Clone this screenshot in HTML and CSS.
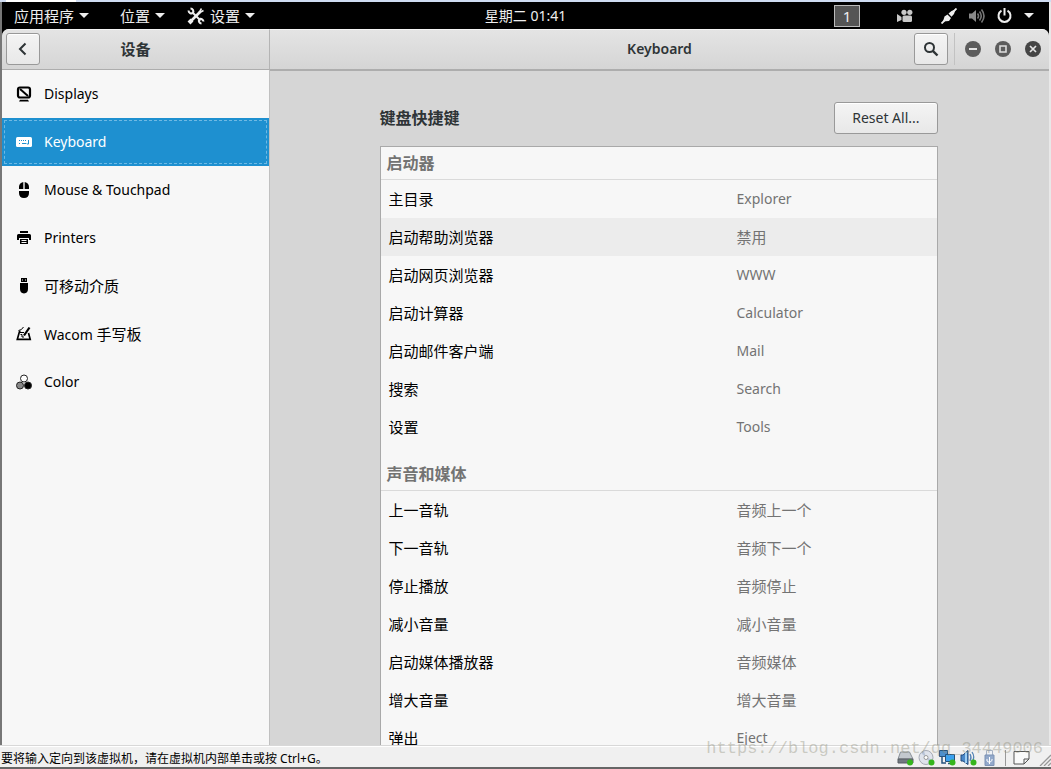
FILE: index.html
```html
<!DOCTYPE html>
<html lang="zh-CN">
<head>
<meta charset="utf-8">
<meta name="viewport" content="width=device-width, initial-scale=1">
<title>Keyboard</title>
<link rel="stylesheet" href="styles.css">
</head>
<body>
<div class="tabstrip"><span class="tabstrip-active"></span></div>
<div class="screen">
  <header class="topbar">
    <div class="menus">
      <button class="menu">应用程序<span class="caret"></span></button>
      <button class="menu">位置<span class="caret"></span></button>
      <button class="menu menu-tools">
        <svg width="18" height="18" viewBox="0 0 18 18" fill="none" stroke="#eee"><path d="M5 5l8.500 8.500" stroke-width="2"/><path d="M13 5L4.500 13.500" stroke-width="2.600"/><path d="M1.500 3.500a3 3 0 0 0 4.500 2.500M3.500 1.500a3 3 0 0 1 2.500 4.500M16.500 14.500a3 3 0 0 0-4-2.500M14.500 16.500a3 3 0 0 1-2.500-4" stroke-width="2"/><path d="M11.500 6.500l3-5M12 6l4.500-2.500" stroke-width="1.500"/><path d="M2 16l3-3" stroke-width="4"/></svg>
        设置<span class="caret"></span></button>
    </div>
    <button class="clock">星期二 01:41</button>
    <div class="tray">
      <button class="workspace">1</button>
      <button class="tray-btn camera" aria-label="录制"><svg width="16" height="14" viewBox="0 0 16 14" fill="#c8c8c8"><circle cx="7" cy="3.300" r="2.600"/><circle cx="12.800" cy="3.300" r="2.600"/><rect x="5.500" y="6.500" width="9.500" height="6.500" rx="1.500"/><path d="M0 5l4.500 3v3L0 13z"/></svg></button>
      <div class="status">
        <button class="tray-btn" aria-label="网络"><svg width="16" height="16" viewBox="0 0 16 16" fill="#eee" stroke="#eee"><path d="M0.500 15.500L4 12M12 4l3.500-3.500" stroke-width="1.800"/><path d="M2 13.500L3.500 8.500l3-2 3.500 3.500-2 3zM7.500 5.500L10.500 3l4-1.500L13 6l-2.500 2.800z" stroke="none"/></svg></button>
        <button class="tray-btn" aria-label="音量"><svg width="16" height="16" viewBox="0 0 16 16" fill="none" stroke="#777" stroke-width="1.600"><path d="M0 5.500h3L7 2v12L3 10.500H0z" fill="#8a8a8a" stroke="none"/><path d="M8.500 5.500q2 2.500 0 5M10.500 3.500q3.500 4.500 0 9M12.500 1.500q5 6.500 0 13"/></svg></button>
        <button class="tray-btn" aria-label="电源"><svg width="15" height="16" viewBox="0 0 15 16" fill="none" stroke="#eee" stroke-width="2"><path d="M7.500 0v7.500M4.500 2.700a6 6 0 1 0 6 0"/></svg></button>
        <span class="caret"></span>
      </div>
    </div>
  </header>

  <div class="window">
    <div class="head head-side">
      <button class="icon-btn" aria-label="返回"><svg width="12" height="14" viewBox="0 0 12 14" fill="none" stroke="#2e3436" stroke-width="2"><path d="M8.500 1.500L3 7l5.500 5.500"/></svg></button>
      <h2 class="title cjk-title">设备</h2>
    </div>
    <div class="head head-main">
      <h1 class="title">Keyboard</h1>
      <div class="head-actions">
        <button class="icon-btn" aria-label="搜索"><svg width="16" height="16" viewBox="0 0 16 16" fill="none" stroke="#2e3436" stroke-width="2"><circle cx="6.500" cy="6.500" r="4.500"/><path d="M9.800 9.800l4.700 4.700" stroke-width="2.400"/></svg></button>
        <div class="win-controls">
          <button class="win-btn" aria-label="最小化"><svg width="16" height="16" viewBox="0 0 16 16"><circle cx="8" cy="8" r="8" fill="#5c5c5c"/><path d="M4 8h8" stroke="#e4e4e4" stroke-width="2"/></svg></button>
          <button class="win-btn" aria-label="最大化"><svg width="16" height="16" viewBox="0 0 16 16"><circle cx="8" cy="8" r="8" fill="#5c5c5c"/><path d="M5 5h6v6H5z" fill="none" stroke="#dedede" stroke-width="1.600"/></svg></button>
          <button class="win-btn" aria-label="关闭"><svg width="16" height="16" viewBox="0 0 16 16"><circle cx="8" cy="8" r="8" fill="#454545"/><path d="M5 5l6 6M11 5l-6 6" stroke="#e4e4e4" stroke-width="1.700"/></svg></button>
        </div>
      </div>
    </div>

    <nav class="sidebar">
      <a class="nav" href="#"><svg width="16" height="16" viewBox="0 0 16 16"><rect x="2" y="1.500" width="12" height="10" rx="2" fill="none" stroke="#000" stroke-width="2.200"/><path d="M4 3l8 7" stroke="#000" stroke-width="2"/><path d="M3 15.500h10l-1-1.700H4z"/></svg>Displays</a>
      <a class="nav active" href="#" aria-current="page"><svg width="16" height="16" viewBox="0 0 16 16"><rect y="3" width="16" height="10" rx="1.500" fill="#fff"/><path d="M3 6.500h8" stroke="#1e90d0" stroke-dasharray="1 1"/><path d="M3 9.500h1M6 9.500h4.500M12.500 6v4H11" fill="none" stroke="#1e90d0"/></svg>Keyboard</a>
      <a class="nav" href="#"><svg width="16" height="16" viewBox="0 0 16 16"><path d="M7.300 0v7H3V5q0-4 4.300-5zM8.700 0v7H13V5q0-4-4.300-5zM3 9h10v2q0 5-5 5t-5-5z"/></svg>Mouse &amp; Touchpad</a>
      <a class="nav" href="#"><svg width="16" height="16" viewBox="0 0 16 16"><path d="M4 1h8v2H4zM2.500 4h11q1.500 0 1.500 1.500V10h-2V8H3v2H1V5.500Q1 4 2.500 4zM4 9h8v5H4z"/><path d="M5.500 10.500h5M5.500 12.500h5" stroke="#f7f7f7"/></svg>Printers</a>
      <a class="nav cjk" href="#"><svg width="16" height="16" viewBox="0 0 16 16"><path d="M5 0h6v4H5zM4 5h8v6q0 4-4 4.500Q4 15 4 11z"/><path d="M6 1.500h1v1H6zM9 1.500h1v1H9z" fill="#f7f7f7"/></svg>可移动介质</a>
      <a class="nav" href="#"><svg width="16" height="16" viewBox="0 0 16 16" fill="none" stroke="#000"><path d="M4.500 5.500H3.500L1.300 13.300h12.900L12.500 7" stroke-width="1.700"/><path d="M13.500 1.500L8 9.500" stroke-width="2.200"/><path d="M2.500 4.500q3 0 5-3.500M4 6.500h4M4.500 8.500h1.500v2.500h2"/></svg><span>Wacom <span class="cjk">手写板</span></span></a>
      <a class="nav" href="#"><svg width="16" height="16" viewBox="0 0 16 16" stroke="#222"><circle cx="8" cy="4.500" r="3.500" fill="#fff"/><circle cx="4" cy="11.500" r="3.500" fill="#888"/><circle cx="12" cy="11.500" r="3.500" fill="#000"/></svg>Color</a>
    </nav>

    <main class="content">
      <div class="panel">
        <div class="panel-head">
          <h2 class="panel-title">键盘快捷键</h2>
          <button class="reset">Reset All...</button>
        </div>
        <table class="shortcuts">
          <colgroup><col class="col-name"><col></colgroup>
          <tbody>
            <tr class="group"><th colspan="2" scope="rowgroup">启动器</th></tr>
            <tr><td>主目录</td><td class="latin">Explorer</td></tr>
            <tr class="hover"><td>启动帮助浏览器</td><td>禁用</td></tr>
            <tr><td>启动网页浏览器</td><td class="latin">WWW</td></tr>
            <tr><td>启动计算器</td><td class="latin">Calculator</td></tr>
            <tr><td>启动邮件客户端</td><td class="latin">Mail</td></tr>
            <tr><td>搜索</td><td class="latin">Search</td></tr>
            <tr><td>设置</td><td class="latin">Tools</td></tr>
          </tbody>
          <tbody>
            <tr class="group group-next"><th colspan="2" scope="rowgroup">声音和媒体</th></tr>
            <tr><td>上一音轨</td><td>音频上一个</td></tr>
            <tr><td>下一音轨</td><td>音频下一个</td></tr>
            <tr><td>停止播放</td><td>音频停止</td></tr>
            <tr><td>减小音量</td><td>减小音量</td></tr>
            <tr><td>启动媒体播放器</td><td>音频媒体</td></tr>
            <tr><td>增大音量</td><td>增大音量</td></tr>
            <tr><td>弹出</td><td class="latin">Eject</td></tr>
          </tbody>
        </table>
      </div>
    </main>
  </div>
</div>

<footer class="statusbar">
  <p class="hint">要将输入定向到该虚拟机，请在虚拟机内部单击或按 Ctrl+G。</p>
  <div class="devices">
    <svg width="17" height="16" viewBox="0 0 17 16"><path d="M3.500 2h9L16 9H1z" fill="#c3c8ce" stroke="#8a9097"/><path d="M1 9h15v4H1z" fill="#727980" stroke="#565c63"/><circle cx="13" cy="12.500" r="3" fill="#35b51c"/></svg>
    <svg width="17" height="16" viewBox="0 0 17 16"><circle cx="8" cy="7.500" r="7" fill="#dfe3ec" stroke="#a6aab4"/><path d="M8 7.500L3 3l3-2zM8 7.500l6 2-2 4z" fill="#b9c4d8"/><circle cx="8" cy="7.500" r="2" fill="#fff" stroke="#999"/><circle cx="13.500" cy="12.500" r="3" fill="#35b51c"/></svg>
    <svg width="17" height="16" viewBox="0 0 17 16"><path d="M.5.500h8v6h-8z" fill="#4d8fcc" stroke="#25527d"/><path d="M6.500 4.500h9v7h-9z" fill="#3ba1ef" stroke="#25527d"/><path d="M3 7v6h4M9 13.500h5" fill="none" stroke="#25527d" stroke-width="1.500"/><circle cx="13.500" cy="12.500" r="3" fill="#35b51c"/></svg>
    <svg width="17" height="16" viewBox="0 0 17 16"><path d="M1 5h2l5-4.500v14L3 11H1z" fill="#4a88c8" stroke="#214b7c"/><path d="M6 2v11" stroke="#9fd0f4" stroke-width="2"/><path d="M10 4q2 3.500 0 7M12 2q3.500 5 0 10" fill="none" stroke="#5383b5" stroke-width="1.300"/><circle cx="13.500" cy="12.500" r="3" fill="#35b51c"/></svg>
    <svg width="17" height="16" viewBox="0 0 17 16"><path d="M5.500.500h6v5h-6z" fill="#eef1f6" stroke="#a7b2c4"/><path d="M4 5h9v10.500H4z" fill="#93a9cb" stroke="#7d92b4"/><path d="M8.500 14V7M6 9v2l2.500 1.500L11 10.500V9" fill="none" stroke="#fff"/></svg>
    <span class="divider"></span>
    <svg class="note" width="17" height="16" viewBox="0 0 17 16"><path d="M1 1.500h15V9l-5 5H1zM16 9h-5v5" fill="#fafafa" stroke="#555"/></svg>
    <svg class="grip" width="12" height="12" viewBox="0 0 12 12"><path d="M1 12L12 1M5 12l7-7M9 12l3-3" stroke="#999" stroke-width="1.300"/></svg>
  </div>
  <span class="watermark">https://blog.csdn.net/qq_34449006</span>
</footer>
</body>
</html>
```
FILE: styles.css
```css
* { box-sizing: border-box; }
body {
  margin: 0;
  height: 100vh;
  display: flex;
  flex-direction: column;
  overflow: hidden;
  background: #f0f0f0;
  color: #000;
  font: 14px/20px "Noto Sans", "Noto Sans CJK SC", sans-serif;
}
button { font: inherit; color: inherit; border: 0; padding: 0; background: none; }
h1, h2, p { margin: 0; }
svg { display: block; flex: none; }

.tabstrip { height: 2px; flex: none; background: #cfdcf2; padding: 0 6px; }
.tabstrip-active { display: block; width: 70px; height: 2px; background: #fff; }

.screen {
  flex: 1;
  min-height: 0;
  display: flex;
  flex-direction: column;
  border-left: 2px solid #777;
  border-right: 2px solid #e8e8e8;
  background: #000;
}

.topbar {
  flex: none;
  height: 27px;
  display: grid;
  grid-template-columns: 1fr auto 1fr;
  align-items: center;
  color: #eee;
}
.menus { display: flex; gap: 31px; padding-left: 12px; }
.menu { display: flex; align-items: center; gap: 5px; font-size: 15px; }
.menu-tools { margin-left: -9px; }
.caret { width: 0; border: 5px solid transparent; border-top-color: #eee; border-bottom: 0; }
.tray { display: flex; justify-content: flex-end; align-items: center; padding-right: 15px; }
.workspace {
  width: 26px;
  height: 22px;
  background: #555;
  border: 1px solid #bbb;
  font-size: 15px;
}
.camera { margin: 0 28px 0 37px; }
.status { display: flex; align-items: center; gap: 12px; }

.window {
  flex: 1;
  min-height: 0;
  display: grid;
  grid-template: 42px minmax(0, 1fr) / 268px minmax(0, 1fr);
  border-radius: 7px 7px 0 0;
  overflow: hidden;
  background: #d6d6d6;
}
.head {
  display: grid;
  grid-template-columns: 1fr auto 1fr;
  align-items: center;
  padding-bottom: 2px;
  background: linear-gradient(#e4e4e4, #d5d5d5);
  border-top: 1px solid #f4f4f4;
  border-bottom: 2px solid #adadad;
}
.head-side { padding-left: 4px; padding-right: 4px; border-right: 1px solid #b4b4b4; border-bottom-width: 1px; margin-bottom: 1px; }
.title { font-size: 14px; line-height: 20px; font-weight: 600; color: #2e3436; }
.head-main .title { grid-column: 2; }
.cjk-title { font-size: 15px; font-weight: 700; }
.icon-btn, .reset {
  border: 1px solid #999;
  border-radius: 3px;
  background: linear-gradient(#f4f4f4, #e8e8e8);
  box-shadow: inset 0 1px #fff;
  color: #2e3436;
}
.icon-btn { width: 34px; height: 32px; display: flex; align-items: center; justify-content: center; }
.head-actions { display: flex; justify-content: flex-end; align-items: center; gap: 6px; padding-right: 8px; }
.win-controls {
  display: flex;
  align-items: center;
  gap: 14px;
  height: 32px;
  padding-left: 10px;
  border-left: 1px solid #c2c2c2;
}

.sidebar { background: #f7f7f7; border-right: 1px solid #c0c0c0; margin-top: -1px; }
.nav {
  display: flex;
  align-items: center;
  gap: 12px;
  height: 48px;
  padding-left: 14px;
  color: #000;
  text-decoration: none;
}
.nav.active { background: #1e90d0; color: #fff; outline: 1px dashed #6fb9e3; outline-offset: -3px; }
.cjk { font-size: 15px; }

.content { padding: 31px 22px 0 20px; overflow: hidden; }
.panel { max-width: 558px; margin: 0 auto; }
.panel-head { display: flex; justify-content: space-between; align-items: center; margin-bottom: 12px; }
.panel-title { font-size: 16px; line-height: 24px; font-weight: 700; color: #2e3436; }
.reset { height: 32px; padding: 0 17px; }

.shortcuts {
  width: 100%;
  table-layout: fixed;
  border-collapse: separate;
  border-spacing: 0;
  border: 1px solid #a9a9a9;
  background: #f7f7f7;
}
.col-name { width: 348px; }
.shortcuts td { height: 38px; padding: 0 8px; font-size: 15px; }
.shortcuts td + td { color: #737373; }
.shortcuts td.latin { font-size: 14px; }
.hover { background: #ececec; }
.group th {
  height: 33px;
  padding: 0 6px;
  border-bottom: 1px solid #dadada;
  color: #737373;
  font-size: 16px;
  font-weight: 700;
  text-align: left;
}
.group-next th { height: 45px; padding-top: 12px; }

.statusbar {
  position: relative;
  flex: none;
  height: 24px;
  display: flex;
  align-items: center;
  justify-content: space-between;
  border-top: 1px solid #d8d8d8;
  border-bottom: 2px solid #666;
  box-shadow: inset 0 1px #fff;
}
.hint { padding: 4px 0 0 1px; font: 12px/16px "Noto Sans", "Noto Sans CJK SC", sans-serif; }
.devices { display: flex; align-items: center; gap: 4px; padding-top: 2px; }
.divider { width: 1px; height: 16px; margin: 0 3px; background: #999; }
.note { margin-right: 5px; }
.grip { align-self: flex-end; }
.watermark {
  position: absolute;
  right: 8px;
  bottom: 8px;
  color: rgba(140, 140, 120, 0.4);
  font: 17px/20px "Liberation Mono", monospace;
  pointer-events: none;
}
```
